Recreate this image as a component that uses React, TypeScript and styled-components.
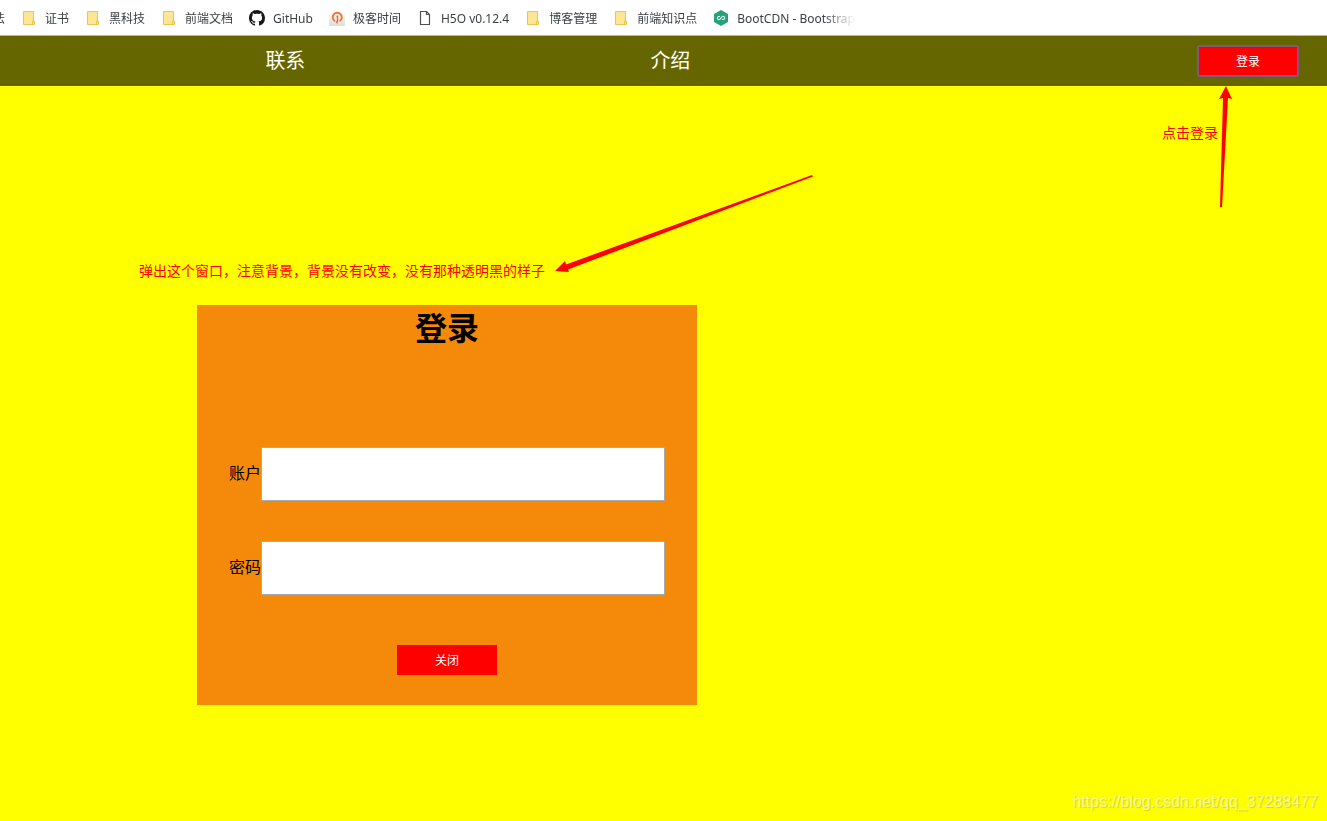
import React from "react";
import styled, { createGlobalStyle } from "styled-components";

const GlobalStyle = createGlobalStyle`
  * { box-sizing: border-box; }
  body {
    margin: 0;
    background: #ffff00;
    color: #000;
    font-family: "Noto Sans", "Noto Sans CJK SC", sans-serif;
    font-size: 16px;
  }
  button, input { font-family: inherit; }
`;

const Page = styled.div`
  position: relative;
  min-height: 100vh;
`;

const BookmarkBar = styled.nav`
  height: 36px;
  background: #fff;
  border-bottom: 1px solid #b4b4b4;
`;

const BookmarkList = styled.div`
  display: flex;
  align-items: center;
  gap: 16px;
  height: 35px;
  max-width: 855px;
  overflow: hidden;
  mask-image: linear-gradient(to right, #000 calc(100% - 32px), transparent);
`;

const Bookmark = styled.a`
  display: flex;
  align-items: center;
  gap: 8px;
  flex: none;
  color: #3c4043;
  font-size: 12px;
  line-height: 16px;
  text-decoration: none;
  white-space: nowrap;
`;

const BookmarkLabel = styled.span`
  padding-top: 2px;
`;

const CutBookmark = styled(Bookmark)`
  width: 5px;
  justify-content: flex-end;
  overflow: hidden;
`;

const Icon = styled.svg`
  width: 16px;
  height: 16px;
  flex: none;
`;

const NavBar = styled.nav`
  display: flex;
  align-items: center;
  height: 50px;
  padding: 0 28px 0 7%;
  background: #666600;
`;

const NavCell = styled.div`
  flex: 0 0 385px;
  text-align: center;
`;

const NavLink = styled.a`
  color: #fff;
  font-size: 20px;
  line-height: 28px;
  text-decoration: none;
`;

const Button = styled.button<{ $focused?: boolean }>`
  display: block;
  width: ${(p) => (p.$focused ? 102 : 100)}px;
  height: ${(p) => (p.$focused ? 32 : 30)}px;
  padding: 0;
  border: ${(p) => (p.$focused ? "2px solid #82587e" : "0")};
  border-radius: ${(p) => (p.$focused ? 2 : 0)}px;
  background: #ff0000;
  color: #fff;
  font-size: 12px;
`;

const LoginSlot = styled.div`
  margin-left: auto;
`;

const Main = styled.main`
  padding: 175px 0 0 133px;
`;

const Note = styled.p`
  margin: 0;
  color: #ff0000;
  font-size: 14px;
  line-height: 20px;
  white-space: nowrap;
`;

const WindowNote = styled(Note)`
  width: 418px;
  text-align: center;
`;

const LoginNote = styled(Note)`
  position: absolute;
  top: 123px;
  right: 109px;
`;

const Arrow = styled.svg`
  position: absolute;
  fill: #ff0000;
`;

const WindowArrow = styled(Arrow)`
  top: 170px;
  left: 550px;
`;

const LoginArrow = styled(Arrow)`
  top: 84px;
  right: 92px;
`;

const Dialog = styled.form`
  display: flex;
  flex-direction: column;
  align-items: center;
  width: 500px;
  height: 400px;
  margin: 24px 0 0 64px;
  background: #f5890a;
`;

const Title = styled.h1`
  margin: 0 0 96px;
  font-size: 32px;
  line-height: 46px;
`;

const Fields = styled.div`
  display: grid;
  gap: 40px;
  margin-bottom: 50px;
`;

const Field = styled.label`
  display: flex;
  align-items: center;
  font-size: 16px;
  line-height: 24px;
`;

const FieldName = styled.span`
  padding-bottom: 2px;
`;

const TextBox = styled.input`
  width: 404px;
  height: 54px;
  padding: 0 8px;
  border: 1px solid #a9a9a9;
  border-radius: 0;
  background: #fff;
  font-size: 16px;
`;

const Watermark = styled.span`
  position: absolute;
  right: 9px;
  bottom: 9px;
  color: rgba(255, 255, 255, 0.6);
  font-family: "Liberation Sans", sans-serif;
  font-size: 16px;
  line-height: 20px;
  text-shadow: 1px 1px 1px rgba(120, 120, 60, 0.3);
`;

const FolderIcon = () => (
  <Icon viewBox="0 0 16 16">
    <path d="M2.5 1.5h10v9.500h1v3.500h-11z" fill="#ffe694" stroke="#e8c54c" />
    <path d="M11.5 14v-3l1-1" fill="none" stroke="#e8c54c" />
  </Icon>
);

const GitHubIcon = () => (
  <Icon viewBox="0 0 16 16">
    <path
      fill="#191717"
      d="M8 0C3.58 0 0 3.58 0 8c0 3.54 2.29 6.53 5.47 7.59.4.07.55-.17.55-.38 0-.19-.01-.82-.01-1.49-2.01.37-2.53-.49-2.69-.94-.09-.23-.48-.94-.82-1.13-.28-.15-.68-.52-.01-.53.63-.01 1.08.58 1.23.82.72 1.21 1.87.87 2.33.66.07-.52.28-.87.51-1.07-1.78-.2-3.64-.89-3.64-3.95 0-.87.31-1.59.82-2.15-.08-.2-.36-1.02.08-2.12 0 0 .67-.21 2.2.82.64-.18 1.32-.27 2-.27s1.36.09 2 .27c1.53-1.04 2.2-.82 2.2-.82.44 1.1.16 1.92.08 2.12.51.56.82 1.27.82 2.15 0 3.07-1.87 3.75-3.65 3.95.29.25.54.73.54 1.48 0 1.07-.01 1.93-.01 2.2 0 .21.15.46.55.38A8.01 8.01 0 0 0 16 8c0-4.42-3.58-8-8-8z"
    />
  </Icon>
);

const GeekIcon = () => (
  <Icon viewBox="0 0 16 16">
    <defs>
      <linearGradient id="geek" x1="0" y1="0" x2="0" y2="1">
        <stop offset="0" stopColor="#fff" />
        <stop offset="1" stopColor="#dedede" />
      </linearGradient>
    </defs>
    <rect width="16" height="16" fill="url(#geek)" />
    <path d="M6 11.2A4.500 4.500 0 1 1 10.500 11.200" fill="none" stroke="#f0752b" strokeWidth="1.9" />
    <path d="M7 6L9.200 5.300V11L8.200 14L6.500 11.800L7.800 11V7Z" fill="#e9682a" />
  </Icon>
);

const FileIcon = () => (
  <Icon viewBox="0 0 16 16" fill="none" stroke="#505050" strokeWidth="1.2">
    <path d="M3.5 1.5h6l3 3v10h-9z" />
    <path d="M9.500 1.500v3h3" />
  </Icon>
);

const BootIcon = () => (
  <Icon viewBox="0 0 16 16">
    <path d="M8 0l7 4v8l-7 4-7-4V4z" fill="#26a17b" />
    <path
      d="M7 6.500H6A1.600 1.600 0 0 0 6 9.700C7.800 9.700 8.200 6.300 10 6.300A1.600 1.600 0 0 1 10 9.500H9"
      fill="none"
      stroke="#fff"
      strokeWidth="1.1"
    />
  </Icon>
);

const bookmarks = [
  { label: "证书", icon: FolderIcon },
  { label: "黑科技", icon: FolderIcon },
  { label: "前端文档", icon: FolderIcon },
  { label: "GitHub", icon: GitHubIcon },
  { label: "极客时间", icon: GeekIcon },
  { label: "H5O v0.12.4", icon: FileIcon },
  { label: "博客管理", icon: FolderIcon },
  { label: "前端知识点", icon: FolderIcon },
  { label: "BootCDN - Bootstrap", icon: BootIcon },
];

export default function App() {
  return (
    <Page>
      <GlobalStyle />
      <BookmarkBar>
        <BookmarkList>
          <CutBookmark href="#">
            <BookmarkLabel>法</BookmarkLabel>
          </CutBookmark>
          {bookmarks.map(({ label, icon: Glyph }) => (
            <Bookmark href="#" key={label}>
              <Glyph />
              <BookmarkLabel>{label}</BookmarkLabel>
            </Bookmark>
          ))}
        </BookmarkList>
      </BookmarkBar>
      <NavBar>
        <NavCell>
          <NavLink href="#">联系</NavLink>
        </NavCell>
        <NavCell>
          <NavLink href="#">介绍</NavLink>
        </NavCell>
        <LoginSlot>
          <Button type="button" $focused>
            登录
          </Button>
        </LoginSlot>
      </NavBar>
      <Main>
        <WindowNote>弹出这个窗口，注意背景，背景没有改变，没有那种透明黑的样子</WindowNote>
        <Dialog>
          <Title>登录</Title>
          <Fields>
            <Field>
              <FieldName>账户</FieldName>
              <TextBox type="text" />
            </Field>
            <Field>
              <FieldName>密码</FieldName>
              <TextBox type="password" />
            </Field>
          </Fields>
          <Button type="button">关闭</Button>
        </Dialog>
      </Main>
      <LoginNote>点击登录</LoginNote>
      <LoginArrow width="20" height="126" viewBox="1215 84 20 126">
        <path d="M1226 86L1232 99L1228 98L1222 207L1220 207L1223 98L1219 99Z" />
      </LoginArrow>
      <WindowArrow width="270" height="110" viewBox="550 170 270 110">
        <path d="M555 271L565 261L566 264.500L812 175L813 176.500L568 269.500L569 272Z" />
      </WindowArrow>
      <Watermark>https://blog.csdn.net/qq_37288477</Watermark>
    </Page>
  );
}
